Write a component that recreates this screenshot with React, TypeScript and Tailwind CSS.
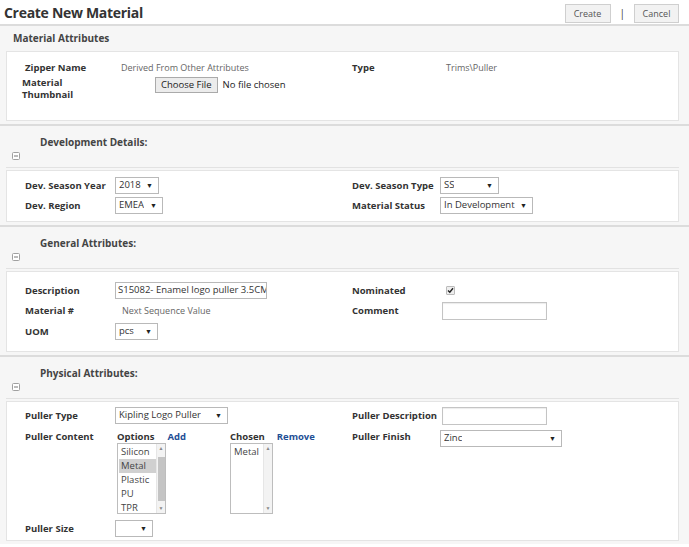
import React from 'react';

const font = "font-['Open_Sans',sans-serif]";

function Label({ children, className = '' }: { children: React.ReactNode; className?: string }) {
  return <div className={`text-[9.5px] font-bold leading-[12px] text-[#333] ${className}`}>{children}</div>;
}

function Select({ value, w }: { value: string; w: string }) {
  return (
    <div
      className={`flex h-[17px] items-center justify-between border border-[#b9b9b9] bg-white pr-[5px] pl-[3px] text-[9.5px] text-[#333] ${w}`}
    >
      <span className="truncate">{value}</span>
      <span className="text-[7px] leading-none text-[#222]">▼</span>
    </div>
  );
}

function TextBox() {
  return (
    <div className="ml-[2px] h-[18px] w-[105px] border border-[#c4c4c4] bg-white shadow-[inset_0_1px_1px_rgba(0,0,0,0.08)]" />
  );
}

function Collapse() {
  return (
    <svg width="8" height="8" viewBox="0 0 8 8" className="block">
      <rect x="0.5" y="0.5" width="7" height="7" rx="1" fill="#fff" stroke="#a0a0a0" />
      <line x1="2" y1="4" x2="6" y2="4" stroke="#777" />
    </svg>
  );
}

function Section({
  title,
  collapsible,
  children,
}: {
  title: string;
  collapsible?: boolean;
  children: React.ReactNode;
}) {
  return (
    <section className="border-t-2 border-[#dcdcdc] bg-[#f6f6f6] pr-[10px] pb-[3px] pl-[6px]">
      {collapsible ? (
        <div className="border-b border-[#e2e2e2] pb-[7px]">
          <div className="pt-[9px] pl-[34px] text-[10px] font-bold leading-[14px] text-[#444]">{title}</div>
          <div className="mt-[3px] pl-[6px]">
            <Collapse />
          </div>
        </div>
      ) : (
        <div className="pt-[5px] pb-[6px] pl-[7px] text-[10px] font-bold leading-[14px] text-[#444]">{title}</div>
      )}
      <div className={`${collapsible ? 'mt-[2px]' : ''} border border-[#e4e4e4] bg-white`}>{children}</div>
    </section>
  );
}

function ListBox({
  items,
  selected,
  w,
  thumb,
}: {
  items: string[];
  selected?: string;
  w: string;
  thumb?: boolean;
}) {
  return (
    <div className={`flex h-[71px] border border-[#bdbdbd] bg-white ${w}`}>
      <div className="flex-1 pt-[1px] pl-[1px]">
        {items.map((it) => (
          <div
            key={it}
            className={`h-[14px] pl-[2px] text-[9.5px] leading-[14px] text-[#444] ${it === selected ? 'bg-[#d0d0d0]' : ''}`}
          >
            {it}
          </div>
        ))}
      </div>
      <div className="flex w-[9px] flex-col items-center justify-between border-l border-[#e6e6e6] bg-[#f3f3f3] py-[2px]">
        <span className="text-[5px] leading-none text-[#888]">▲</span>
        {thumb && <div className="h-[44px] w-[7px] flex-none bg-[#c4c4c4]" />}
        <span className="text-[5px] leading-none text-[#888]">▼</span>
      </div>
    </div>
  );
}

export default function App() {
  return (
    <div className={`${font} h-[547px] w-[689px] overflow-hidden bg-white`}>
      {/* Header */}
      <div className="flex h-[24px] items-center justify-between pr-[10px] pl-[4px]">
        <h1 className="text-[14px] font-bold tracking-[-0.3px] text-[#333]">Create New Material</h1>
        <div className="flex items-center gap-[9px] self-start pt-[4px]">
          <button className="h-[19px] w-[46px] border border-[#cfcfcf] bg-[#f2f2f2] text-[9px] text-[#555]">Create</button>
          <span className="text-[10px] text-[#333]">|</span>
          <button className="h-[19px] w-[45px] border border-[#cfcfcf] bg-[#f2f2f2] text-[9px] text-[#555]">Cancel</button>
        </div>
      </div>

      {/* Material Attributes */}
      <Section title="Material Attributes">
        <div className="grid grid-cols-[96px_231px_94px_1fr] pt-[9px] pb-[19px] pl-[18px] text-[9px] text-[#666]">
          <Label className="py-[1px]">Zipper Name</Label>
          <div className="leading-[14px]">Derived From Other Attributes</div>
          <Label className="py-[1px]">Type</Label>
          <div className="leading-[14px]">Trims\Puller</div>
          <Label className="-ml-[3px] pt-[2px]">
            Material
            <br />
            Thumbnail
          </Label>
          <div className="col-span-3 flex items-center gap-[5px] self-start pt-[2px] pl-[34px]">
            <div className="flex h-[16px] items-center border border-[#aaa] bg-[#ececec] px-[5px] text-[9.5px] text-[#222]">
              Choose File
            </div>
            <span className="text-[9.5px] text-[#222]">No file chosen</span>
          </div>
        </div>
      </Section>

      {/* Development Details */}
      <Section title="Development Details:" collapsible>
        <div className="grid grid-cols-[90px_237px_88px_1fr] gap-y-[3px] pt-[6px] pb-[7px] pl-[18px]">
          <Label className="self-center">Dev. Season Year</Label>
          <Select value="2018" w="w-[44px]" />
          <Label className="self-center">Dev. Season Type</Label>
          <Select value="SS" w="w-[59px]" />
          <Label className="self-center">Dev. Region</Label>
          <Select value="EMEA" w="w-[48px]" />
          <Label className="self-center">Material Status</Label>
          <Select value="In Development" w="w-[93px]" />
        </div>
      </Section>

      {/* General Attributes */}
      <Section title="General Attributes:" collapsible>
        <div className="grid grid-cols-[90px_237px_88px_1fr] gap-y-[3px] pt-[10px] pb-[11px] pl-[18px]">
          <Label className="self-center">Description</Label>
          <div className="flex h-[17px] w-[152px] items-center overflow-hidden border border-[#b9b9b9] pl-[2px] text-[9.5px] whitespace-nowrap text-[#333]">
            S15082- Enamel logo puller 3.5CM
          </div>
          <Label className="self-center">Nominated</Label>
          <div className="flex items-center pl-[6px]">
            <div className="flex h-[9px] w-[9px] items-center justify-center rounded-[1px] border border-[#bbb] bg-[#eee]">
              <svg width="7" height="7" viewBox="0 0 7 7">
                <path d="M1 3.6 L2.8 5.3 L6 1.3" fill="none" stroke="#222" strokeWidth="1.4" />
              </svg>
            </div>
          </div>
          <Label className="self-center">Material #</Label>
          <div className="self-center pl-[7px] text-[9px] text-[#666]">Next Sequence Value</div>
          <Label className="self-center">Comment</Label>
          <TextBox />
          <Label className="self-center">UOM</Label>
          <Select value="pcs" w="w-[43px]" />
        </div>
      </Section>

      {/* Physical Attributes */}
      <Section title="Physical Attributes:" collapsible>
        <div className="grid grid-cols-[90px_237px_88px_1fr] pt-[5px] pb-[3px] pl-[18px]">
          <Label className="self-center">Puller Type</Label>
          <Select value="Kipling Logo Puller" w="w-[113px]" />
          <Label className="self-center whitespace-nowrap">Puller Description</Label>
          <TextBox />

          <Label className="pt-[6px]">Puller Content</Label>
          <div className="flex pt-[6px] pl-[2px]">
            <div className="w-[113px]">
              <div className="flex gap-[13px] text-[9.5px] leading-[12px] font-bold">
                <span className="text-[#333]">Options</span>
                <span className="text-[#1f4f96]">Add</span>
              </div>
              <ListBox items={['Silicon', 'Metal', 'Plastic', 'PU', 'TPR']} selected="Metal" w="w-[49px]" thumb />
            </div>
            <div>
              <div className="flex gap-[12px] text-[9.5px] leading-[12px] font-bold">
                <span className="text-[#333]">Chosen</span>
                <span className="text-[#1f4f96]">Remove</span>
              </div>
              <ListBox items={['Metal']} w="w-[43px]" />
            </div>
          </div>
          <Label className="pt-[6px]">Puller Finish</Label>
          <div className="pt-[5px]">
            <Select value="Zinc" w="w-[122px]" />
          </div>

          <Label className="mt-[6px] self-center">Puller Size</Label>
          <div className="mt-[6px]">
            <Select value="" w="w-[38px]" />
          </div>
        </div>
      </Section>
    </div>
  );
}
